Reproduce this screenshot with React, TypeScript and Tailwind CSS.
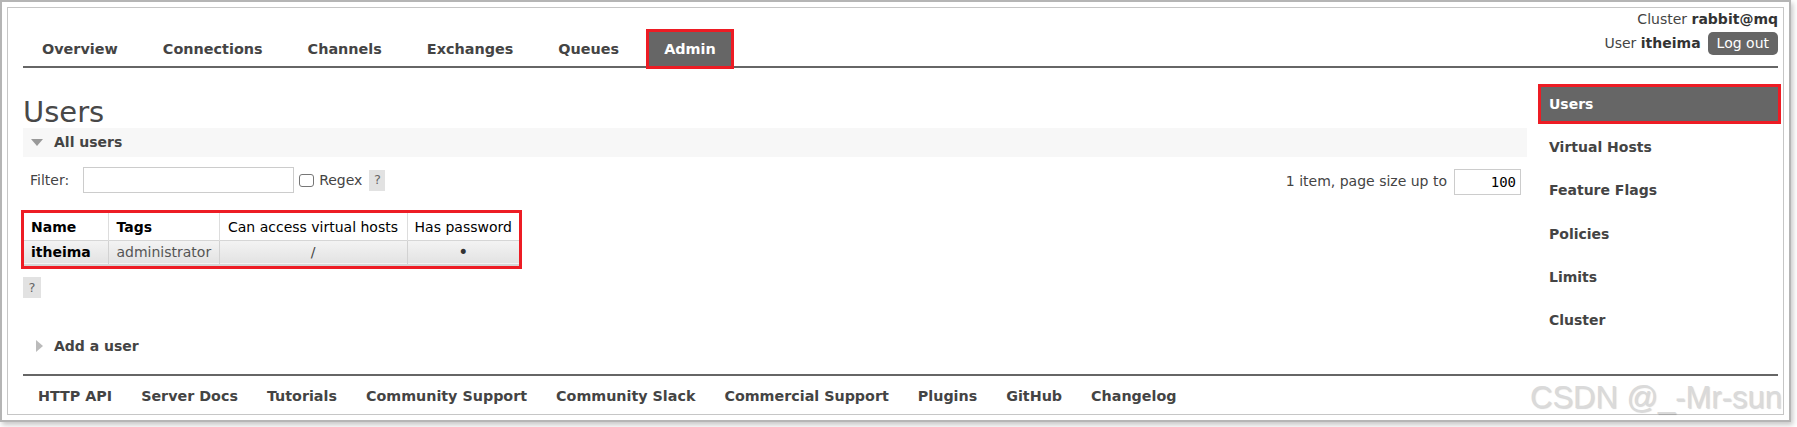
const tabs = ["Overview", "Connections", "Channels", "Exchanges", "Queues", "Admin"];

const sideLinks = ["Users", "Virtual Hosts", "Feature Flags", "Policies", "Limits", "Cluster"];

const footerLinks = [
  "HTTP API",
  "Server Docs",
  "Tutorials",
  "Community Support",
  "Community Slack",
  "Commercial Support",
  "Plugins",
  "GitHub",
  "Changelog",
];

function Header() {
  return (
    <div className="flex h-[60px] shrink-0 justify-between border-b-2 border-[#666]">
      <ul className="flex gap-[15px] self-end pl-[4px] text-[14.4px]">
        {tabs.map((t) => (
          <li
            key={t}
            className={
              t === "Admin"
                ? "flex h-[34px] items-center bg-[#666] px-[15px] pt-[1px] font-bold text-white outline-[3px] outline-[#ed1c24]"
                : "flex h-[34px] items-center px-[15px] pt-[1px] font-bold text-[#444]"
            }
          >
            {t}
          </li>
        ))}
      </ul>
      <div className="flex flex-col items-end pt-[1px]">
        <p className="leading-[20px]">
          Cluster <b className="text-[#333]">rabbit@mq</b>
        </p>
        <div className="mt-[3px] flex items-center">
          <span>
            User <b className="text-[#333]">itheima</b>
          </span>
          <span className="ml-[7px] h-[23px] rounded-[5px] bg-[#666] px-[9px] leading-[23px] text-white">
            Log out
          </span>
        </div>
      </div>
    </div>
  );
}

function UsersTable() {
  return (
    <table className="ml-[1px] mt-[19px] border-collapse outline-[3px] outline-[#ed1c24]">
      <thead>
        <tr className="h-[27px] bg-white">
          <th className="w-[84px] border-r border-[#ddd] pl-[7px] pt-[2px] text-left font-bold text-black">Name</th>
          <th className="w-[111px] border-r border-[#ddd] pl-[8px] pt-[2px] text-left font-bold text-black">Tags</th>
          <th className="w-[188px] border-r border-[#ddd] pt-[2px] text-center font-normal text-black">
            Can access virtual hosts
          </th>
          <th className="w-[112px] pt-[2px] text-center font-normal text-black">Has password</th>
        </tr>
      </thead>
      <tbody>
        <tr className="h-[25px] border-t border-b-2 border-[#d6d6d6] bg-gradient-to-b from-[#f3f3f3] to-[#e3e3e3]">
          <td className="border-r border-[#d2d2d2] pl-[7px] pt-[1px] font-bold text-black">itheima</td>
          <td className="border-r border-[#d2d2d2] pl-[8px] pt-[1px] text-[#555]">administrator</td>
          <td className="border-r border-[#d2d2d2] pt-[1px] text-center text-[#444]">/</td>
          <td className="pt-[1px] text-center text-[17px] leading-none text-[#333]">•</td>
        </tr>
      </tbody>
    </table>
  );
}

function MainColumn() {
  return (
    <div className="flex w-[1504px] flex-col">
      <h1 className="mt-[30px] text-[29px] leading-[29px] text-[#484848]">Users</h1>
      <div className="mt-[1px] flex h-[29px] items-center bg-[#f7f7f7] pl-[8px]">
        <span className="h-0 w-0 border-x-[6px] border-t-[7px] border-x-transparent border-t-[#999]" />
        <span className="ml-[11px] font-bold text-[#444]">All users</span>
      </div>
      <div className="mt-[9px] flex h-[28px] items-center justify-between pr-[6px]">
        <div className="flex items-center pl-[7px]">
          <span>Filter:</span>
          <span className="ml-[14px] h-[26px] w-[211px] border border-[#ccc] bg-white" />
          <span className="ml-[5px] h-[13px] w-[15px] rounded-[3px] border border-[#767676] bg-white" />
          <span className="ml-[5px]">Regex</span>
          <span className="ml-[7px] flex h-[21px] w-[16px] items-center justify-center bg-[#e2e2e2] text-[13px] text-[#666]">
            ?
          </span>
        </div>
        <div className="flex items-center pt-[3px]">
          <span>1 item, page size up to</span>
          <span className="ml-[7px] h-[26px] w-[67px] border border-[#ccc] bg-white pr-[4px] text-right font-['DejaVu_Sans_Mono',monospace] leading-[24px] text-black">
            100
          </span>
        </div>
      </div>
      <div>
        <UsersTable />
      </div>
      <span className="mt-[11px] flex h-[21px] w-[18px] items-center justify-center bg-[#e2e2e2] text-[13px] text-[#666]">
        ?
      </span>
      <div className="mt-[38px] flex h-[20px] items-center pl-[13px]">
        <span className="h-0 w-0 border-y-[6px] border-l-[7px] border-y-transparent border-l-[#bbb]" />
        <span className="ml-[11px] font-bold text-[#444]">Add a user</span>
      </div>
    </div>
  );
}

function Sidebar() {
  return (
    <ul className="flex w-[237px] flex-col gap-[9.4px] pt-[19px]">
      {sideLinks.map((s) => (
        <li
          key={s}
          className={
            s === "Users"
              ? "flex h-[34px] items-center bg-[#666] pl-[8px] font-bold text-white outline-[3px] outline-[#ed1c24]"
              : "flex h-[34px] items-center pl-[8px] font-bold text-[#444]"
          }
        >
          {s}
        </li>
      ))}
    </ul>
  );
}

export default function App() {
  return (
    <div className="h-[427px] w-[1797px] bg-white font-['DejaVu_Sans',Verdana,sans-serif] text-[14px] text-[#444]">
      <div className="relative h-[422px] w-[1791px] border-2 border-[#b5b5b5] bg-white p-[5px] shadow-[2px_3px_5px_rgba(0,0,0,0.22)]">
        <div className="flex h-full flex-col border border-[#c6c6c6] pl-[15px] pr-[5px]">
          <Header />
          <div className="flex flex-1 gap-[14px]">
            <MainColumn />
            <Sidebar />
          </div>
          <div className="flex h-[40px] shrink-0 items-center border-t-2 border-[#666] pl-[15px] pt-[3px]">
            <ul className="flex gap-[29px] text-[14.3px]">
              {footerLinks.map((f) => (
                <li key={f} className="font-bold text-[#444]">
                  {f}
                </li>
              ))}
            </ul>
          </div>
        </div>
        <span className="absolute left-[1528px] top-[380px] whitespace-nowrap font-['Liberation_Sans',Arial,sans-serif] text-[31px] leading-[31px] text-[#dadada] [text-shadow:1px_1px_1px_rgba(0,0,0,0.16)]">
          CSDN @_-Mr-sun
        </span>
      </div>
    </div>
  );
}
